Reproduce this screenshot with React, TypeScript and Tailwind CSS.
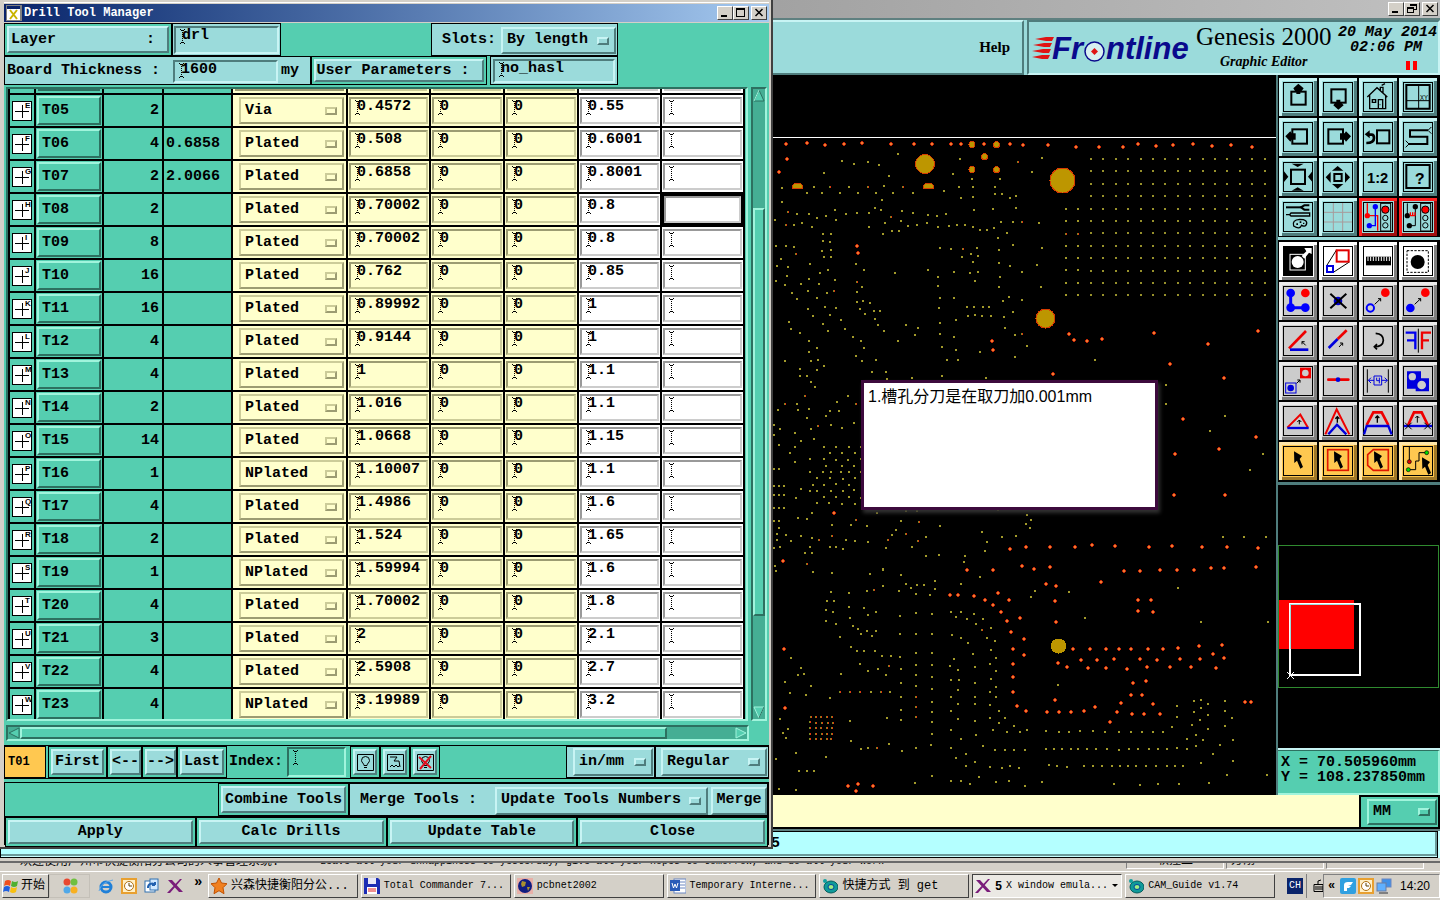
import { ReactNode } from "react";
import clsx from "clsx";

const MONO = "font-['Liberation_Mono','Noto_Sans_CJK_SC',monospace]";

const RAISED = "border-2 border-t-[#c8f4f4] border-l-[#c8f4f4] border-r-[#4f7d7d] border-b-[#4f7d7d] bg-[#9bdbdb]";
const SUNKEN = "border-2 border-t-[#4f7d7d] border-l-[#4f7d7d] border-r-[#c8f4f4] border-b-[#c8f4f4] bg-[#9bdbdb]";
const GREEN_RAISED = "border-2 border-t-[#a0f4dc] border-l-[#a0f4dc] border-r-[#2d7060] border-b-[#2d7060] bg-[#55ceb0]";
const GREEN_SUNKEN = "border-2 border-t-[#2d7060] border-l-[#2d7060] border-r-[#a0f4dc] border-b-[#a0f4dc] bg-[#55ceb0]";
const YELLOW_RAISED = "border-2 border-t-[#cccc99] border-l-[#cccc99] border-r-[#9c9c72] border-b-[#9c9c72] bg-[#ffffcc]";
const YELLOW_SUNKEN = "border-2 border-t-[#9c9c72] border-l-[#9c9c72] border-r-[#cccc99] border-b-[#cccc99] bg-[#ffffcc]";
const WHITE_SUNKEN = "border-2 border-t-[#999999] border-l-[#999999] border-r-[#cccccc] border-b-[#cccccc] bg-white";
const WIN_RAISED = "border border-t-white border-l-white border-r-[#404040] border-b-[#404040] bg-[#d4d0c8]";

interface Tool {
  id: string;
  count: number;
  slot: string;
  type: string;
  finish: string;
  drill: string;
}

const tools: Tool[] = [
  { id: "T05", count: 2, slot: "", type: "Via", finish: "0.4572", drill: "0.55" },
  { id: "T06", count: 4, slot: "0.6858", type: "Plated", finish: "0.508", drill: "0.6001" },
  { id: "T07", count: 2, slot: "2.0066", type: "Plated", finish: "0.6858", drill: "0.8001" },
  { id: "T08", count: 2, slot: "", type: "Plated", finish: "0.70002", drill: "0.8" },
  { id: "T09", count: 8, slot: "", type: "Plated", finish: "0.70002", drill: "0.8" },
  { id: "T10", count: 16, slot: "", type: "Plated", finish: "0.762", drill: "0.85" },
  { id: "T11", count: 16, slot: "", type: "Plated", finish: "0.89992", drill: "1" },
  { id: "T12", count: 4, slot: "", type: "Plated", finish: "0.9144", drill: "1" },
  { id: "T13", count: 4, slot: "", type: "Plated", finish: "1", drill: "1.1" },
  { id: "T14", count: 2, slot: "", type: "Plated", finish: "1.016", drill: "1.1" },
  { id: "T15", count: 14, slot: "", type: "Plated", finish: "1.0668", drill: "1.15" },
  { id: "T16", count: 1, slot: "", type: "NPlated", finish: "1.10007", drill: "1.1" },
  { id: "T17", count: 4, slot: "", type: "Plated", finish: "1.4986", drill: "1.6" },
  { id: "T18", count: 2, slot: "", type: "Plated", finish: "1.524", drill: "1.65" },
  { id: "T19", count: 1, slot: "", type: "NPlated", finish: "1.59994", drill: "1.6" },
  { id: "T20", count: 4, slot: "", type: "Plated", finish: "1.70002", drill: "1.8" },
  { id: "T21", count: 3, slot: "", type: "Plated", finish: "2", drill: "2.1" },
  { id: "T22", count: 4, slot: "", type: "Plated", finish: "2.5908", drill: "2.7" },
  { id: "T23", count: 4, slot: "", type: "NPlated", finish: "3.19989", drill: "3.2" },
];

// Board coordinates are in thirds of a pixel, one block per vertical section.
const vias = [
  {
    top: 0,
    points:
      "384,462 216,483 252,492 294,486 327,495 162,519 357,528 36,563 132,561 237,561 342,558 111,579 156,579 210,579 264,579 318,579 369,579 429,579 36,606 336,600 81,642 117,642 141,654 168,648 195,630 228,642 261,639 297,639 315,624 333,630 15,660 72,675 96,669 126,681 198,660 297,681 345,669 393,663 396,633 429,639 474,645 501,648 528,642 339,702 366,693 387,693 414,678 441,675 471,669 504,681 537,678 561,675 585,675 609,681 630,690 651,690 672,684 693,666 729,666 807,669 570,477 549,522 522,573 573,594 609,591 606,537 609,561 567,561 612,630 669,627 690,537 675,561 675,582 696,582 720,594 738,588 738,624 786,516 816,474 711,699 684,714 159,702 183,702 159,723 180,726 156,753 183,750 162,771 183,771 18,738 48,738 72,741 33,777 21,798 54,801 51,828 18,843 45,855 93,852 120,792 150,819 174,810 117,837 147,852 195,840 114,873 66,879 81,897 141,894 171,879 165,921 198,924 114,927 129,948 180,945 213,960 159,972 57,966 63,987 225,987 258,792 282,810 276,861 261,876 261,906 279,903 300,909 270,927 285,942 312,933 330,933 315,957 324,975 375,819 474,810 504,831 504,858 510,894 507,924 510,969 408,975 444,984 510,744 543,747 621,744 576,771 603,762 624,768 609,786 552,816 600,819 624,816 615,843 552,894 591,921 612,921 639,921 657,921 594,948 615,945 636,948 663,948 558,960 687,750 729,735 687,789 720,798 690,831 687,861 756,816 801,795 816,744 813,861 717,891 699,903 756,900 729,936 702,951 705,984 888,627 924,627 888,663 924,663 888,738 924,738 888,774 924,774 888,811 924,811 888,849 924,849 888,885 924,885",
  },
  {
    top: 990,
    points:
      "90,9 174,3 249,21 342,3 435,15 510,12 552,21 735,15 771,48 117,33 141,54 117,66 273,33 282,54 258,78 276,93 318,90 384,33 516,51 558,60 531,90 564,90 630,66 735,81 45,93 123,93 144,90 162,108 90,117 141,120 90,138 111,138 123,156 135,171 306,126 348,126 351,147 426,144 516,138 648,144 975,90 234,198 201,216 81,222 24,240 84,240 117,237 180,243 207,243 168,258 111,264 252,279 183,285 216,294 12,285 30,297 123,297 12,315 75,309 93,333 132,327 27,345 75,351 60,369 75,396 162,351 198,351 237,351 273,351 180,369 216,369 255,369 120,387 162,387 198,390 234,390 273,387 168,408 216,408 252,408 120,426 159,426 183,426 213,426 237,426 273,426 141,444 180,444 219,447 255,444 129,465 162,465 198,462 237,465 120,483 141,483 183,483 219,483 252,480 162,501 198,501 237,501 273,504 141,519 177,519 216,522 255,522 12,417 27,417 12,468 27,468 42,468 12,495 27,495 42,495 12,534 27,534 42,534 93,477 78,504 12,573 27,573 27,594 21,612 48,615 63,633 21,630 93,618 126,549 84,564 111,567 126,624 120,651 105,669 126,669 180,651 198,651 219,657 228,630 255,633 243,585 186,585 12,654 30,651 291,588 321,549 294,636 348,654 366,615 378,600 393,573 426,651 468,621 468,678 507,675 510,588 408,543 441,543 684,540 636,606 651,636 645,663 585,678 582,696 696,621 738,618 771,555 783,570 768,582 780,594 1188,165 1188,222 1365,258 1320,303 1479,372 1440,420 1359,621 1422,621 1488,621 15,708 339,718",
  },
  {
    top: 1680,
    points:
      "582,6 18,33 129,36 186,39 300,42 339,30 339,78 393,45 387,93 408,72 423,84 441,75 462,75 495,63 495,87 438,102 480,105 573,72 630,51 237,99 291,93 183,96 171,123 192,123 168,150 189,156 168,183 198,192 210,231 237,141 282,144 318,156 294,165 240,174 249,198 264,207 291,213 318,213 273,222 306,228 243,261 261,273 282,273 315,273 336,288 363,288 390,291 270,312 324,327 294,333 348,345 213,342 390,168 438,159 486,162 390,222 438,222 486,222 438,279 486,279 393,327 438,315 486,315 438,345 486,351 393,369 438,378 486,387 393,411 486,426 393,450 486,456 393,480 486,486 486,522 483,555 438,564 396,573 486,648 435,669 543,156 573,156 612,162 558,171 591,177 639,177 618,192 663,204 546,225 573,234 594,249 651,234 675,243 609,282 663,270 678,294 552,297 540,318 564,330 660,312 678,333 615,321 615,369 663,357 678,381 543,360 567,360 564,390 543,411 564,432 615,411 660,396 678,411 543,453 615,432 660,435 687,453 564,477 615,483 660,474 705,474 687,489 732,498 543,510 573,537 618,525 669,510 711,516 750,516 771,510 543,564 588,582 639,558 675,570 705,570 732,570 765,570 558,594 615,606 588,618 660,621 696,624 720,618 747,624 543,663 573,663 600,672 627,651 678,666 717,663 765,678 816,666 837,615 861,618 891,621 942,618 969,618 996,618 1026,618 1050,618 1074,618 1098,618 1128,618 1158,618 1191,618 1215,618 1239,618 828,567 852,567 876,567 903,567 924,567 951,567 978,567 1011,567 1047,570 1077,567 1104,567 1137,567 1164,567 1191,567 1221,564 1251,567 828,513 867,516 897,516 930,513 969,513 1005,516 1047,516 1083,516 1116,516 1149,516 1179,516 1206,501 1221,471 1221,438 1272,423 1293,420 1314,432 1293,444 1314,465 1272,456 1290,480 1266,495 1314,507 1278,525 1251,537 1299,540 1278,558 1365,423 1365,453 1386,474 1365,498 1389,540 1350,555 1329,582 1389,603 1371,645 1293,609 1317,669 1227,672 1164,672 1110,675 1032,672 1491,645 1494,186 1293,186 1224,84 945,174 864,375 795,93 783,111 897,96 63,294 93,324 84,345 102,342 45,366 123,378 60,399 108,405 180,414 30,477 54,507 39,519 48,534 18,597 78,579 168,591 87,633 111,633 132,633 27,687 78,690 240,483 351,474 243,543 273,567 294,564 357,552 303,396 360,396",
  },
];

const plated = [
  {
    top: 0,
    points:
      "48,432 112,429 166,435 223,432 277,429 364,432 433,432 487,432 544,432 574,432 643,432 721,432 758,434 835,435 918,440 988,441 1058,441 1105,432 1159,438 1210,435 1270,432 1325,438 1382,435 1445,441 52,478 28,517 262,738 265,758",
  },
  {
    top: 990,
    points:
      "667,33 670,60 897,12 913,29 950,32 996,28 1153,9 1315,41 1465,4 1201,102 1362,145 850,132 1240,268 1458,321 1348,357 1216,373 1212,495 1366,496 192,550 721,657 769,651 841,651 915,651 967,645 1036,648 1137,651 1207,648 1297,651 1371,651 1465,655 38,692 757,708 792,716 841,712",
  },
  {
    top: 1680,
    points:
      "592,30 670,30 1063,33 1111,33 1171,30 1222,30 1273,30 1324,24 1363,24 1458,20 993,67 828,72 859,78 541,105 565,105 613,108 646,120 685,99 718,120 670,135 692,156 712,183 751,174 724,216 763,237 730,267 761,286 730,312 729,351 730,396 742,438 769,453 855,124 859,186 1105,120 1144,120 1105,154 1150,155 908,268 961,267 1009,267 1048,267 1082,268 1135,268 1180,268 1225,264 1286,258 1357,255 1330,282 1363,294 934,300 982,300 1033,297 1110,297 1162,301 1231,297 1290,298 892,321 864,310 955,324 1009,323 1072,327 1132,321 1201,321 1264,321 1339,324 1090,369 1129,364 1082,404 1117,405 1054,430 1148,431 1042,456 1087,462 1123,463 1171,462 1021,486 855,420 832,456 868,456 904,456 943,453 976,441 1424,426 1443,426 42,267 46,444 235,678 264,673 310,678 257,694",
  },
];

// Small vias with a red edge on one side.
const mixed = [
  { top: 0, points: "181,561 293,561 398,561 54,636 362,651 48,674 77,762 260,846 192,873 744,485 756,667 580,747 888,702 924,702" },
  { top: 990, points: "105,197 45,221 257,223 145,288 258,569 147,629 187,618 354,629 408,613 447,575 444,632 112,702 755,12" },
  {
    top: 1680,
    points:
      "313,90 357,317 210,395 241,396 270,395 333,395 437,411 437,441 437,471 321,563 636,209 122,471 138,471 153,471 170,471 186,471 120,487 138,488 156,488 173,489 189,489 120,504 138,504 153,504 171,504 186,504 120,522 138,522 156,521 171,522 186,522 120,537 138,537 153,536 171,537 183,537",
  },
];

const toPixels = (blocks: { top: number; points: string }[]) =>
  blocks.flatMap(({ top, points }) =>
    points.split(" ").map((p) => {
      const [x, y] = p.split(",").map(Number);
      return [769 + Math.round(x / 3), Math.round((top + y) / 3) - 1];
    })
  );

const dots = (pts: number[][], size: number) =>
  pts.map(([x, y]) => `M${x} ${y}h${size}v${size}h${-size}z`).join("");

const bgaCols = Array.from({ length: 15 }, (_, i) => Math.round(1090 + i * 12.4));
const bgaRows = Array.from({ length: 12 }, (_, i) => Math.round(158 + i * 12.4));
const bga = bgaCols.flatMap((x) => bgaRows.map((y) => [x, y]));

function Board() {
  const red = toPixels(plated);
  const edge = toPixels(mixed);
  return (
    <svg className="block shrink-0" width="503" height="720" viewBox="773 75 503 720" shapeRendering="crispEdges">
      <rect x="773" y="137" width="503" height="1" fill="#fff" />
      <path d={dots(toPixels(vias), 2)} fill="#a39a2a" />
      <path d={dots(bga, 2)} fill="#97912c" />
      <path d={dots(edge, 2)} fill="#7d8a20" />
      <path d={edge.map(([x, y]) => `M${x + 1} ${y}h1v2h-1z`).join("")} fill="#e03a10" />
      <path d={red.map(([x, y]) => `M${x} ${y - 1}h2v1h1v2h-1v1h-2v-1h-1v-2h1z`).join("")} fill="#c42808" />
      <path d={dots(red, 2)} fill="#f07c30" />
      <g fill="#bd9600" stroke="#d63c00">
        <circle cx="925" cy="164" r="9.5" />
        <circle cx="1062.500" cy="180.500" r="12.500" />
        <circle cx="1045.500" cy="318.500" r="9.500" />
        <ellipse cx="1058.500" cy="646" rx="7.500" ry="7" stroke="#bd9600" />
        <circle cx="972" cy="144.500" r="3" />
        <circle cx="996.500" cy="144.500" r="3" />
        <circle cx="984.500" cy="156.500" r="3" />
        <circle cx="972" cy="169.500" r="3" />
        <circle cx="996.500" cy="169.500" r="3" />
        <path d="M792.500 188.500v-3l2-2h6l2 2v3z" />
        <path d="M923.500 188.500v-3l2-2h6l2 2v3z" />
      </g>
    </svg>
  );
}

function Ibeam() {
  return (
    <svg className="pointer-events-none absolute left-1 top-0 block" width="5" height="17" viewBox="0 0 5 17" shapeRendering="crispEdges">
      <path d="M0 1h1v1h-1zM4 1h1v1h-1zM1 2h1v1h-1zM3 2h1v1h-1zM1 14h1v1h-1zM3 14h1v1h-1zM0 15h1v1h-1zM4 15h1v1h-1z" />
      <path d="M2.500 2V15" stroke="#000" strokeDasharray="1 1" />
    </svg>
  );
}

function Field({ label, value = "", skin, className, caret = true }: { label: string; value?: string; skin: string; className?: string; caret?: boolean }) {
  return (
    <div className={clsx("relative", skin, className)}>
      {caret && <Ibeam />}
      <input aria-label={label} defaultValue={value} className="block h-4 w-full bg-transparent pl-[6px] text-[15px] font-bold outline-none" />
    </div>
  );
}

function OptionMenu({ label, options, value, skin, knob, className }: { label: string; options: string[]; value: string; skin: string; knob: string; className?: string }) {
  return (
    <div className={clsx("relative", skin, className)}>
      <select aria-label={label} defaultValue={value} className="block h-full w-full appearance-none bg-transparent pl-1 text-[15px] font-bold outline-none">
        {options.map((o) => (
          <option key={o}>{o}</option>
        ))}
      </select>
      <span className={clsx("pointer-events-none absolute right-[5px] top-1/2 h-2 w-3 -translate-y-1/2", knob)} />
    </div>
  );
}

const types = ["Via", "Plated", "NPlated"];

function ToolRow({ tool, letter, selected }: { tool: Tool; letter: string; selected: boolean }) {
  return (
    <tr className="h-[33px]">
      <td className="border-2 border-black p-0">
        <svg className="ml-[2px] block" width="20" height="20" viewBox="0 0 20 20" shapeRendering="crispEdges">
          <rect x=".5" y=".5" width="19" height="19" fill="#fff" stroke="#000" />
          <path d="M3 10.500H17M10.500 4V17" stroke="#000" />
          <text x="13" y="7" fontSize="8" className="font-['Liberation_Sans',sans-serif]">{letter}</text>
        </svg>
      </td>
      <td className="border-2 border-black p-0">
        <button className={clsx("mx-px block h-[29px] w-[64px] pl-[3px] text-left", GREEN_RAISED)}>{tool.id}</button>
      </td>
      <td className="border-2 border-black p-0 pr-[3px] text-right">{tool.count}</td>
      <td className="border-2 border-black p-0 pl-[2px]">{tool.slot}</td>
      <td className="border-2 border-black bg-[#ffffcc] p-0">
        <OptionMenu label={`${tool.id} type`} options={types} value={tool.type} skin={YELLOW_RAISED} knob={YELLOW_RAISED} className="ml-[6px] mr-[2px] h-[27px]" />
      </td>
      <td className="border-2 border-black bg-[#ffffcc] p-0">
        <Field label={`${tool.id} finish size`} value={tool.finish} skin={YELLOW_SUNKEN} className="mx-px h-[27px]" />
      </td>
      <td className="border-2 border-black bg-[#ffffcc] p-0">
        <Field label={`${tool.id} plus tolerance`} value="0" skin={YELLOW_SUNKEN} className="mx-px h-[27px]" />
      </td>
      <td className="border-2 border-black bg-[#ffffcc] p-0">
        <Field label={`${tool.id} minus tolerance`} value="0" skin={YELLOW_SUNKEN} className="mx-px h-[27px]" />
      </td>
      <td className="border-2 border-black bg-white p-0">
        <Field label={`${tool.id} drill size`} value={tool.drill} skin={WHITE_SUNKEN} className="mx-px h-[27px]" />
      </td>
      <td className={clsx("border-2 border-black p-0", selected ? "bg-black" : "bg-white")}>
        <Field label={`${tool.id} bit`} skin={WHITE_SUNKEN} className={clsx("h-[27px]", selected ? "mx-[2px]" : "mx-px")} caret={!selected} />
      </td>
    </tr>
  );
}

function ToolTable() {
  return (
    <table className="w-[737px] table-fixed border-collapse text-[15px] font-bold leading-[18px]">
      <colgroup>
        <col className="w-[26px]" />
        <col className="w-[68px]" />
        <col className="w-[60px]" />
        <col className="w-[69px]" />
        <col className="w-[115px]" />
        <col className="w-[83px]" />
        <col className="w-[74px]" />
        <col className="w-[74px]" />
        <col className="w-[83px]" />
        <col className="w-[83px]" />
      </colgroup>
      <tbody>
        <tr className="h-[5px]" aria-hidden="true">
          {["", "border-[#2d7060]", "", "", "border-[#9c9c72]", "border-[#cccc99]", "border-[#cccc99]", "border-[#cccc99]", "border-[#cccccc]", "border-[#cccccc]"].map((edge, i) => (
            <td key={i} className={clsx("border-x-2 border-black p-0 align-top", i > 7 ? "bg-white" : i > 3 && "bg-[#ffffcc]")}>
              {edge && <div className={clsx("mx-[2px] border-t-2", edge)} />}
            </td>
          ))}
        </tr>
        {tools.map((tool, i) => (
          <ToolRow key={tool.id} tool={tool} letter={String.fromCharCode(69 + i)} selected={tool.id === "T08"} />
        ))}
      </tbody>
    </table>
  );
}

function PushButton({ children, className, frame }: { children: ReactNode; className?: string; frame?: string }) {
  return (
    <div className={clsx("flex border border-black bg-[#55ceb0] p-[2px]", frame)}>
      <button className={clsx("flex-1 whitespace-nowrap leading-[20px]", RAISED, className)}>{children}</button>
    </div>
  );
}

function WindowButtons({ restore = false }: { restore?: boolean }) {
  return (
    <div className="flex">
      <button aria-label="Minimize" className={clsx("h-[14px] w-4", WIN_RAISED)}>
        <svg width="14" height="12" viewBox="0 0 14 12" className="block"><path d="M3 9h6" stroke="#000" strokeWidth="2" /></svg>
      </button>
      <button aria-label="Maximize" className={clsx("h-[14px] w-4", WIN_RAISED)}>
        <svg width="14" height="12" viewBox="0 0 14 12" className="block" fill="none" stroke="#000" shapeRendering="crispEdges">
          {restore ? <path d="M5.500 3V1.500h6v5H9M5.500 2.500h6M2.500 4.500h6v5h-6zM2.500 5.500h6" /> : <path d="M2.500 1.500h8v8h-8zM2 2.500h9" />}
        </svg>
      </button>
      <button aria-label="Close window" className={clsx("ml-[2px] h-[14px] w-4", WIN_RAISED)}>
        <svg width="14" height="12" viewBox="0 0 14 12" className="block"><path d="M3.500 2l7 7M10.500 2l-7 7" stroke="#000" strokeWidth="1.500" /></svg>
      </button>
    </div>
  );
}

function DrillToolManager() {
  return (
    <section className="absolute bottom-[51px] left-0 top-0 flex w-[773px] flex-col border-r-2 border-b-2 border-[#404040] bg-[#d4d0c8] pl-1 pr-[2px] pb-[2px]">
      <div className="mt-[2px] h-[2px] border-t border-white" />
      <header className="flex h-[18px] shrink-0 items-center bg-gradient-to-r from-[#0a246a] to-[#a6caf0] px-[2px]">
        <svg width="16" height="16" viewBox="0 0 16 16">
          <rect width="16" height="16" fill="#808080" />
          <rect x="1" y="4" width="13" height="11" fill="#fff" />
          <rect x="1" y="1" width="13" height="3" fill="#0a246a" />
          <path d="M4 5l7 9M11 5l-7 9" stroke="#c8b400" strokeWidth="2" />
        </svg>
        <h1 className="flex-1 pl-[2px] text-[12px] font-bold text-white">Drill Tool Manager</h1>
        <WindowButtons />
      </header>
      <div className="mt-px flex min-h-0 flex-1 flex-col bg-[#55ceb0] text-[15px] font-bold">
        <div className="flex h-[33px] shrink-0">
          <div className="flex w-[168px] border border-black p-[2px]">
            <button className={clsx("flex flex-1 items-center justify-between pl-[2px] pr-3 pt-px", RAISED)}>
              <span>Layer</span>
              <span>:</span>
            </button>
          </div>
          <div className="w-[109px] border border-black bg-[#9bdbdb] p-px pt-[2px]">
            <Field label="Layer" value="drl" skin={SUNKEN} className="h-7" />
          </div>
          <div className="ml-[150px] flex w-[187px] items-center border border-black bg-[#9bdbdb] pb-px pr-px pt-[3px]">
            <label className="w-[69px] pl-[10px]">Slots:</label>
            <OptionMenu label="Slots" options={["By length", "By count"]} value="By length" skin={RAISED} knob={RAISED} className="h-[27px] flex-1" />
          </div>
        </div>
        <div className="flex h-[29px] shrink-0">
          <div className="flex w-[307px] items-center border border-black bg-[#9bdbdb] pb-px pt-[3px]">
            <label className="w-[168px] pl-[2px]">Board Thickness :</label>
            <Field label="Board thickness" value="1600" skin={SUNKEN} className="h-[23px] w-[105px]" />
            <span className="pl-[3px]">my</span>
          </div>
          <PushButton frame="w-[176px]" className="pr-3">User Parameters :</PushButton>
          <div className="ml-[3px] w-[128px] border border-black bg-[#9bdbdb] px-[2px] pb-px pt-[2px]">
            <Field label="User parameters" value="no_hasl" skin={SUNKEN} className="h-6" />
          </div>
        </div>

        {/* tool list with its scroll bars */}
        <div className="mt-[2px] flex min-h-0 flex-1 gap-[3px] pl-[2px] pr-[2px]">
          <div className={clsx("min-w-0 flex-1 overflow-hidden", GREEN_SUNKEN)}>
            <ToolTable />
          </div>
          <div className={clsx("flex w-4 flex-col", GREEN_SUNKEN)}>
            <div className="flex flex-1 flex-col bg-[#45ae94]">
              <svg width="12" height="13" viewBox="0 0 12 13" className="block"><path d="M1 12L6 1l5 11z" fill="#55ceb0" stroke="#2d7060" /><path d="M1 12L6 1" stroke="#a0f4dc" /></svg>
              <div className="basis-[106px]" />
              <div className={clsx("grow basis-0", GREEN_RAISED)} />
              <div className="basis-[90px]" />
              <svg width="12" height="13" viewBox="0 0 12 13" className="block"><path d="M1 1h10L6 12z" fill="#55ceb0" stroke="#a0f4dc" /><path d="M11 1L6 12" stroke="#2d7060" /></svg>
            </div>
          </div>
        </div>
        <div className={clsx("ml-[2px] mr-[20px] mt-1 flex h-4 shrink-0", GREEN_SUNKEN)}>
          <div className="flex flex-1 bg-[#45ae94]">
            <svg width="12" height="12" viewBox="0 0 12 12" className="block"><path d="M11 1v10L1 6z" fill="#55ceb0" stroke="#2d7060" /></svg>
            <div className={clsx("flex-1", GREEN_RAISED)} />
            <div className="w-[68px]" />
            <svg width="12" height="12" viewBox="0 0 12 12" className="block"><path d="M1 1v10l10-5z" fill="#55ceb0" stroke="#a0f4dc" /></svg>
          </div>
        </div>

        <div className="mt-1 flex h-[34px] shrink-0 border-y border-black">
          <div className="flex w-[42px] items-center border border-black bg-[#ffc850] pl-[3px] text-[12px]">T01</div>
          <PushButton frame="ml-[2px] w-[59px]">First</PushButton>
          <PushButton frame="w-[35px]">{"<--"}</PushButton>
          <PushButton frame="w-[35px]">{"-->"}</PushButton>
          <PushButton frame="w-[50px]">Last</PushButton>
          <label className="flex w-[60px] items-center pl-[2px]">Index:</label>
          <Field label="Index" skin={GREEN_SUNKEN} className="my-px w-[59px]" />
          <div className="ml-1 flex">
            <PushButton frame="w-[30px]" className="flex items-center justify-center">
              <svg width="17" height="17" viewBox="0 0 17 17" fill="none" stroke="#000"><path d="M.5.500h16v16H.5zM7 11.500c0-2-2.500-3-2.500-5a4 4 0 018 0c0 2-2.500 3-2.500 5zM7 13.500h3" /></svg>
            </PushButton>
            <PushButton frame="w-[30px]" className="flex items-center justify-center">
              <svg width="17" height="17" viewBox="0 0 17 17" fill="none" stroke="#000"><path d="M.5.500h16v16H.5zM3 3h7l-3 4h5l1 6M3 13l2-2 2 2 2-2 2 2 2-2" /></svg>
            </PushButton>
            <PushButton frame="w-[30px]" className="flex items-center justify-center">
              <svg width="17" height="17" viewBox="0 0 17 17" fill="none" stroke="#000"><path d="M.5.500h16v16H.5zM7 11.500c0-2-2.500-3-2.500-5a4 4 0 018 0c0 2-2.500 3-2.500 5zM7 13.500h3" /><path d="M2 3l12 11M14 2L3 15" stroke="#e01020" strokeWidth="2" /></svg>
            </PushButton>
          </div>
          <div className="ml-auto flex w-[89px] border border-black bg-[#9bdbdb] py-px pl-[6px] pr-px">
            <OptionMenu label="Units" options={["in/mm", "mm/in"]} value="in/mm" skin={RAISED} knob={RAISED} className="flex-1" />
          </div>
          <div className="flex w-[114px] border border-black bg-[#9bdbdb] py-px pl-[5px] pr-px">
            <OptionMenu label="View" options={["Regular", "Full"]} value="Regular" skin={RAISED} knob={RAISED} className="flex-1" />
          </div>
        </div>

        <div className="mt-[3px] flex h-[34px] shrink-0 border border-b-0 border-black">
          <PushButton frame="ml-[213px] w-[131px]">Combine Tools</PushButton>
          <div className="flex flex-1 items-center border border-black bg-[#9bdbdb] pb-px pt-[3px]">
            <label className="flex-1 pl-[10px]">Merge Tools :</label>
            <OptionMenu label="Merge tools" options={["Update Tools Numbers", "Keep Tools Numbers"]} value="Update Tools Numbers" skin={RAISED} knob={RAISED} className="h-7 w-[213px]" />
            <button className={clsx("ml-[3px] h-7 w-[56px]", RAISED)}>Merge</button>
          </div>
        </div>
        <div className="grid h-[29px] shrink-0 grid-cols-4 border border-black">
          {["Apply", "Calc Drills", "Update Table", "Close"].map((name) => (
            <PushButton key={name}>{name}</PushButton>
          ))}
        </div>
      </div>
    </section>
  );
}

const cursor = "M45 28L69 42L62 51L72 75L64 80L54 56L46 63Z";
const thinArrow = "M47 67L65 50M57 50H65V58";

function TrafficLight() {
  return (
    <g stroke="#000" strokeWidth="3" fill="none">
      <rect x="65" y="16" width="30" height="83" fill="#9bdbdb" />
      <circle cx="79" cy="35" r="11" fill="#f00" />
      <circle cx="79" cy="60" r="8" />
      <circle cx="79" cy="82" r="8" />
    </g>
  );
}

const viewTools: { name: string; hot?: boolean; art: ReactNode }[] = [
  { name: "Pan up", art: <><rect x="37" y="41" width="43" height="39" fill="none" stroke="#000" strokeWidth="6" /><path d="M58 17L74 31L68 39H64V48H52V39H48L43 31Z" /></> },
  { name: "Pan down", art: <><rect x="37" y="34" width="43" height="40" fill="none" stroke="#000" strokeWidth="6" /><path d="M58 95L74 82L68 75H64V65H52V75H48L43 82Z" /></> },
  { name: "Home", art: <path d="M25 57L54 29L85 57M32 52V92H80V52M40 65H50V73H40ZM58 92V65H71V92M64 38V28H72V45M68 22L78 17M62 80h2" fill="none" stroke="#000" strokeWidth="4" /> },
  { name: "Zoom to point", art: <><path d="M22 21H92V92H22Z" fill="none" stroke="#000" strokeWidth="6" /><path d="M59 21V92M22 68H92" stroke="#000" strokeWidth="3" /><text x="63" y="66" fontSize="20" className="font-['Liberation_Mono',monospace]">XY</text></> },
  { name: "Pan left", art: <><rect x="40" y="34" width="44" height="43" fill="none" stroke="#000" strokeWidth="6" /><path d="M19 55L34 40L38 46H50V65H38L34 71Z" /></> },
  { name: "Pan right", art: <><rect x="28" y="34" width="44" height="43" fill="none" stroke="#000" strokeWidth="6" /><path d="M96 55L81 40L77 46H63V65H77L81 71Z" /></> },
  { name: "Previous view", art: <><rect x="54" y="37" width="37" height="39" fill="none" stroke="#000" strokeWidth="6" /><path d="M28 50H38Q45 50 45 60Q45 75 22 75" fill="none" stroke="#000" strokeWidth="8" /><path d="M17 49L32 37V61Z" /></> },
  { name: "Serpentine", art: <><path d="M87 37H33V56H85V78H30" fill="none" stroke="#000" strokeWidth="6" /><path d="M97 27L87 37L97 47M20 68L30 78L20 88" fill="none" stroke="#000" strokeWidth="3" /></> },
  { name: "Zoom out", art: <><rect x="36" y="35" width="42" height="43" fill="none" stroke="#000" strokeWidth="6" /><path d="M38 17H74L56 27ZM38 98H74L56 88ZM15 40L28 56L15 72ZM100 40L87 56L100 72Z" /></> },
  { name: "Zoom in", art: <><rect x="46" y="48" width="22" height="21" fill="none" stroke="#000" strokeWidth="6" /><path d="M39 38L56 24L73 38ZM39 78L56 92L73 78ZM35 42L20 58L35 74ZM78 42L93 58L78 74Z" /></> },
  { name: "Scale 1:2", art: <text x="24" y="75" fontSize="44" fontWeight="bold" className="font-['Liberation_Sans',sans-serif]">1:2</text> },
  { name: "Help on area", art: <><path d="M22 21H92V90H22Z" fill="none" stroke="#000" strokeWidth="6" /><text x="48" y="78" fontSize="48" fontWeight="bold" className="font-['Liberation_Mono',monospace]">?</text></> },
  { name: "Options", art: <><path d="M21 28H68" stroke="#000" strokeWidth="6" /><path d="M91 22H76L66 28L76 35H91" fill="none" stroke="#000" strokeWidth="6" /><path d="M21 50H32L36 45H92V54H36L32 50" fill="none" stroke="#000" strokeWidth="4" /><path d="M44 84Q38 66 62 64Q88 64 82 80Q78 88 68 82Q62 96 44 84Z" fill="none" stroke="#000" strokeWidth="4" /><path d="M52 76h5v5h-5zM62 70h5v5h-5zM72 74h4v4h-4z" /></> },
  { name: "Grid", art: <path d="M43 15V99M71 15V99M15 43H99M15 72H99" stroke="#a89a9a" strokeWidth="3" /> },
  { name: "Net on", hot: true, art: <><path d="M25 16V53H56V98" fill="none" stroke="#f00" strokeWidth="4" /><path d="M49 26V83H31" fill="none" stroke="#00f" strokeWidth="4" /><circle cx="25" cy="53" r="8" fill="#f00" /><circle cx="49" cy="26" r="8" fill="#00f" /><circle cx="31" cy="83" r="8" fill="#00f" /><TrafficLight /></> },
  { name: "Net off", hot: true, art: <><path d="M25 16V53M49 26V83H31" fill="none" stroke="#000" strokeWidth="3" /><circle cx="25" cy="53" r="8" /><circle cx="49" cy="26" r="8" /><circle cx="31" cy="83" r="8" /><path d="M33 53H48M34 53V43M41 53V43M48 53V43" stroke="#f00" strokeWidth="4" /><TrafficLight /></> },
];

const editTools: { name: string; tone: "white" | "gray" | "amber"; art: ReactNode }[] = [
  { name: "Select feature", tone: "white", art: <><rect x="13" y="15" width="88" height="85" /><rect x="33" y="37" width="46" height="47" fill="none" stroke="#fff" strokeWidth="3" /><circle cx="56" cy="60" r="18" fill="#fff" /><path d="M68 42L82 28L76 18H98V36L90 32L76 50Z" fill="#fff" /></> },
  { name: "Resize shape", tone: "white", art: <><path d="M23 71L53 23M43 91L91 60" stroke="#000" strokeWidth="3" /><rect x="53" y="25" width="36" height="34" fill="none" stroke="#e00000" strokeWidth="6" /><rect x="24" y="72" width="18" height="18" fill="#fff" stroke="#0000e0" strokeWidth="6" /></> },
  { name: "Measure", tone: "white", art: <><rect x="21" y="44" width="75" height="26" /><path d="M27 44V57M35 44V57M43 44V57M51 44V57M59 44V57M67 44V57M75 44V57M83 44V57M91 44V57" stroke="#fff" strokeWidth="3" /></> },
  { name: "Area select", tone: "white", art: <><rect x="24" y="26" width="64" height="65" fill="none" stroke="#000" strokeWidth="3" strokeDasharray="7 4" /><circle cx="56" cy="60" r="21" /></> },
  { name: "Chain", tone: "gray", art: <><path d="M35 33V77H79" fill="none" stroke="#00f" strokeWidth="9" /><circle cx="35" cy="33" r="13" fill="#00f" /><circle cx="35" cy="77" r="13" fill="#00f" /><circle cx="79" cy="77" r="13" fill="#00f" /><circle cx="79" cy="33" r="13" fill="#f00" /></> },
  { name: "Delete", tone: "gray", art: <><circle cx="57" cy="57" r="13" fill="#00c" /><path d="M34 35L82 79M82 35L34 79" stroke="#000" strokeWidth="6" /></> },
  { name: "Move", tone: "gray", art: <><circle cx="34" cy="78" r="11" fill="none" stroke="#00f" strokeWidth="6" /><circle cx="79" cy="32" r="13" fill="#f00" /><path d={thinArrow} fill="none" stroke="#000" strokeWidth="3" /></> },
  { name: "Copy", tone: "gray", art: <><circle cx="34" cy="78" r="13" fill="#00f" /><circle cx="79" cy="32" r="13" fill="#f00" /><path d={thinArrow} fill="none" stroke="#000" strokeWidth="3" /></> },
  { name: "Rotate line", tone: "gray", art: <><path d="M30 79L81 27" stroke="#e00" strokeWidth="8" /><path d="M33 83H88" stroke="#00d" strokeWidth="8" /><path d="M80 70L69 59M69 67V59H77" fill="none" stroke="#000" strokeWidth="3" /></> },
  { name: "Stretch line", tone: "gray", art: <><path d="M29 78L56 51" stroke="#00d" strokeWidth="8" /><path d="M56 51L83 25" stroke="#e00" strokeWidth="8" /><path d="M60 75L71 63M63 63H71V71" fill="none" stroke="#000" strokeWidth="3" /></> },
  { name: "Rotate", tone: "gray", art: <path d="M50 34Q73 36 73 55Q72 74 46 74M54 66L46 74L54 82" fill="none" stroke="#000" strokeWidth="5" /> },
  { name: "Mirror", tone: "gray", art: <><path d="M20 32H49V82M24 55H49" fill="none" stroke="#00e" strokeWidth="7" /><path d="M69 82V32H96M69 55H90" fill="none" stroke="#e00" strokeWidth="7" /><path d="M58 20V92" stroke="#000" strokeWidth="3" /></> },
  { name: "Transform", tone: "gray", art: <><rect x="63" y="17" width="33" height="32" fill="#e00" /><circle cx="79" cy="33" r="10" fill="#ccc" /><rect x="20" y="63" width="31" height="30" fill="none" stroke="#00d" strokeWidth="3" /><circle cx="35" cy="78" r="10" fill="#00d" /><path d="M53 64L63 54M55 54H63V62" fill="none" stroke="#000" strokeWidth="3" /></> },
  { name: "Break line", tone: "gray", art: <><path d="M28 53H88" stroke="#e00" strokeWidth="8" strokeLinecap="round" /><circle cx="57" cy="53" r="7" fill="#00d" /></> },
  { name: "Spacing", tone: "gray", art: <><path d="M25 22V92M88 22V92" stroke="#000" strokeWidth="3" /><path d="M28 55H45M68 55H85M36 47L28 55L36 63M77 47L85 55L77 63M45 42H68V69H45ZM53 47V56H61M61 47V64" fill="none" stroke="#00d" strokeWidth="3" /></> },
  { name: "Surface", tone: "gray", art: <><path d="M24 28H66V49H90V88H50V80H24Z" fill="#00d" /><circle cx="40" cy="44" r="11" fill="#ccc" /><circle cx="68" cy="69" r="13" fill="#ccc" /></> },
  { name: "Edge angle", tone: "gray", art: <><path d="M25 77L64 38L87 77" fill="none" stroke="#e00" strokeWidth="6" /><path d="M25 78H89" stroke="#00d" strokeWidth="7" /><path d="M61 67V54M55 60L61 54L67 60" fill="none" stroke="#000" strokeWidth="3" /></> },
  { name: "Edge peak", tone: "gray", art: <><path d="M19 97L53 22L91 97" fill="none" stroke="#e00" strokeWidth="6" /><path d="M28 97L54 68L82 97" fill="none" stroke="#00d" strokeWidth="7" /><path d="M55 62V44M49 50L55 44L61 50" fill="none" stroke="#000" strokeWidth="4" /></> },
  { name: "Edge plateau", tone: "gray", art: <><path d="M23 69L43 31H68L88 69" fill="none" stroke="#e00" strokeWidth="8" /><path d="M15 97L23 72H88L98 97" fill="none" stroke="#00d" strokeWidth="7" /><path d="M55 62V42M49 48L55 42L61 48" fill="none" stroke="#000" strokeWidth="4" /></> },
  { name: "Edge trim", tone: "gray", art: <><path d="M26 72L45 31H68L88 72" fill="none" stroke="#e00" strokeWidth="8" /><path d="M15 72H99" stroke="#00d" strokeWidth="7" /><path d="M18 62L38 82M38 62L18 82M76 62L96 82M96 62L76 82M55 62V42M49 48L55 42L61 48" fill="none" stroke="#000" strokeWidth="3" /></> },
  { name: "Pointer", tone: "amber", art: <path d={cursor} /> },
  { name: "Rectangle select", tone: "amber", art: <><rect x="26" y="23" width="62" height="62" fill="none" stroke="#e01800" strokeWidth="5" /><path d={cursor} /></> },
  { name: "Polygon select", tone: "amber", art: <><path d="M43 23H88V85H43L26 70V38Z" fill="none" stroke="#e01800" strokeWidth="5" /><path d={cursor} /></> },
  { name: "Net select", tone: "amber", art: <><path d="M31 12V59M28 83H50V57H60V32H83" fill="none" stroke="#000" strokeWidth="3" /><g stroke="#000" strokeWidth="2"><circle cx="83" cy="32" r="6" fill="#0d0" /><circle cx="28" cy="83" r="6" fill="#0d0" /><circle cx="31" cy="59" r="6" fill="#d00" /></g><path d={cursor} transform="translate(24 18)" /></> },
];

const toneClass = {
  white: "bg-white shadow-[inset_3px_3px_0_#ffffff,inset_-3px_-3px_0_#808080]",
  gray: "bg-[#cccccc] shadow-[inset_3px_3px_0_#ebebeb,inset_-3px_-3px_0_#808080]",
  amber: "bg-[#ffc850] shadow-[inset_3px_3px_0_#ffe6a8,inset_-3px_-3px_0_#a07828]",
};

function ToolIcon({ name, skin, children }: { name: string; skin: string; children: ReactNode }) {
  return (
    <button title={name} aria-label={name} className={clsx("size-[38px]", skin)}>
      <svg className="block" width="38" height="38" viewBox="0 0 114 114">
        <rect x="13.500" y="13.500" width="87" height="87" fill="none" stroke="#000" strokeWidth="3" shapeRendering="crispEdges" />
        {children}
      </svg>
    </button>
  );
}

function Sidebar() {
  return (
    <aside className="flex w-[164px] shrink-0 flex-col border-l-2 border-[#4f7d7d] bg-black">
      <div className="grid grid-cols-[repeat(4,38px)] gap-[2px] border-b-[3px] border-[#9bdbdb] pb-px pl-px pt-[3px]">
        {viewTools.map((t) => (
          <ToolIcon
            key={t.name}
            name={t.name}
            skin={t.hot ? "bg-[#9bdbdb] shadow-[inset_3px_3px_0_#ff2020,inset_-3px_-3px_0_#a01010]" : "bg-[#9bdbdb] shadow-[inset_3px_3px_0_#c8f4f4,inset_-3px_-3px_0_#4f7d7d]"}
          >
            {t.art}
          </ToolIcon>
        ))}
      </div>
      <div className="grid grid-cols-[repeat(4,38px)] gap-[2px] py-[2px] pl-px">
        {editTools.map((t) => (
          <ToolIcon key={t.name} name={t.name} skin={toneClass[t.tone]}>
            {t.art}
          </ToolIcon>
        ))}
      </div>
      {/* overview map */}
      <div className="min-h-0 flex-1 overflow-hidden border-t-[3px] border-b-2 border-t-[#4f7d7d] border-b-[#c8f4f4]">
        <svg className="block" width="162" height="262" viewBox="1278 485 162 262" shapeRendering="crispEdges">
          <path d="M1278.500 545.500H1438V687.500H1278.500Z" fill="none" stroke="#2f8a2f" />
          <rect x="1279" y="600" width="75" height="49" fill="#f00" />
          <rect x="1290" y="604" width="70" height="71" fill="none" stroke="#fff" strokeWidth="2" />
          <path d="M1290 649V604H1354" fill="none" stroke="#9bdbdb" />
          <path d="M1287 672l7 7M1294 672l-7 7" stroke="#fff" />
        </svg>
      </div>
      <div className="h-[45px] shrink-0 border-t border-r-2 border-b-2 border-t-[#2d7060] border-r-[#a0f4dc] border-b-[#a0f4dc] bg-[#55ceb0] pl-[3px] pt-1 text-[15px] font-bold leading-[15px]">
        <p>X = 70.505960mm</p>
        <p>Y = 108.237850mm</p>
      </div>
    </aside>
  );
}

function Frontline() {
  return (
    <svg width="164" height="40" viewBox="1030 26 164 40" role="img" aria-label="Frontline" className="shrink-0">
      <g fill="#e01414">
        <path d="M1036 37L1047 35H1055L1053 39H1047Z" />
        <path d="M1034 43L1045 41H1053L1051 45H1045Z" />
        <path d="M1033 49L1044 47H1052L1050 51H1044Z" />
        <path d="M1033 55L1043 53H1051L1049 57H1043Z" />
      </g>
      <g fill="#0a0a8c" fontSize="31" fontWeight="bold" fontStyle="italic" className="font-['Liberation_Sans',sans-serif]">
        <text x="1053" y="57">Fr</text>
        <text x="1107" y="57">ntline</text>
      </g>
      <circle cx="1095.500" cy="49.500" r="9.500" fill="#d8f0f0" stroke="#0a0a8c" strokeWidth="1.500" />
      <path d="M1095.500 46l3.500 3.500-3.500 3.500-3.500-3.500z" fill="#e01414" />
    </svg>
  );
}

function GenesisEditor() {
  return (
    <main className="flex min-h-0 flex-1 flex-col bg-black">
      <div className="flex h-[18px] shrink-0 items-center justify-end bg-gradient-to-r from-[#808080] to-[#c0c0c0] pr-[2px]">
        <WindowButtons restore />
      </div>
      <div className="flex h-[57px] shrink-0 border-t-2 border-[#5f8080] bg-[#9bdbdb]">
        <nav className={clsx("flex flex-1 items-center justify-end pr-3", RAISED)}>
          <button className="font-['Liberation_Serif',serif] text-[15px] font-bold">Help</button>
        </nav>
        <div className={clsx("ml-[3px] flex w-[413px] shrink-0 items-center", SUNKEN)}>
          <Frontline />
          <div className="pl-[3px] text-center font-['Liberation_Serif',serif]">
            <p className="whitespace-nowrap text-[25px] leading-[28px]">Genesis 2000</p>
            <p className="text-[14px] font-bold italic leading-[22px]">Graphic Editor</p>
          </div>
          <div className="ml-auto pr-px text-[15px] font-bold italic leading-[15px]">
            <p>20 May 2014</p>
            <p className="pl-3">02:06 PM</p>
            <div className="ml-[68px] mt-[6px] flex gap-[3px]">
              <span className="h-[9px] w-1 bg-[#ff0000]" />
              <span className="h-[9px] w-1 bg-[#ff0000]" />
            </div>
          </div>
        </div>
      </div>
      <div className="flex min-h-0 flex-1">
        <div className="relative flex min-w-0 flex-1 justify-end overflow-hidden">
          <Board />
          <div className="absolute right-[118px] top-[305px] h-[130px] w-[297px] border-[3px] border-[#3d0a3d] bg-white px-1 py-1 font-['Liberation_Sans','Noto_Sans_CJK_SC',sans-serif] text-[16px] leading-[20px] shadow-[2px_3px_4px_#333333]">
            1.槽孔分刀是在取刀加0.001mm
          </div>
        </div>
        <Sidebar />
      </div>
      <div className="flex h-[34px] shrink-0 border-b-2 border-black">
        <div className="flex-1 bg-[#ffffcc]" />
        <div className="flex w-[81px] border-2 border-b-0 border-black bg-[#55ceb0] py-[2px] pl-[6px] pr-px">
          <OptionMenu label="Display units" options={["MM", "INCH"]} value="MM" skin={GREEN_RAISED} knob={GREEN_RAISED} className="flex-1" />
        </div>
      </div>
      <div className="h-[29px] shrink-0 border-t-2 border-[#5f8080] bg-[#c8ffff] pr-[2px]">
        <div className="h-[27px] border border-black">
          <output className="block h-[24px] border-r-2 border-b-2 border-[#6a9a9a] bg-[#b4ffff] pl-[770px] text-[15px] font-bold leading-[24px]">5</output>
        </div>
      </div>
    </main>
  );
}

const taskIcons = {
  star: <path d="M8 0l2.500 5 5.500.7-4 4 1 6-5-3-5 3 1-6-4-4L5.500 5z" fill="#f08020" stroke="#c05000" />,
  disk: <><path d="M0 0h14l2 2v14H0z" fill="#1c2cb4" /><rect x="4" width="8" height="6" fill="#e8e8f8" /><rect x="3" y="9" width="10" height="7" fill="#fff" /><path d="M4 11h8M4 13h8" stroke="#e02020" /></>,
  globe: <><rect width="16" height="16" fill="#e8b0a8" /><circle cx="8" cy="8" r="7" fill="#101c80" /><path d="M5 3l4 1-1 4-3 1-1-3zM10 9l3 0-2 4z" fill="#a89030" /></>,
  word: <><rect x="4" y="1" width="12" height="14" fill="#fff" stroke="#6a86c0" /><path d="M8 4h7M8 7h7M8 10h7" stroke="#6a86c0" /><rect y="2" width="10" height="11" fill="#2b5cb8" /><path d="M2 5l1.500 5L5 6l1.500 4L8 5" fill="none" stroke="#fff" /></>,
  cam: <><ellipse cx="9" cy="9" rx="7" ry="6" fill="#109a9a" stroke="#045c5c" /><ellipse cx="9" cy="9" rx="3" ry="2.500" fill="#a0f080" stroke="#0040a0" /><circle cx="3" cy="3" r="2" fill="#10a0a0" /></>,
  x: <path d="M1 2h4l11 12h-4zM13 1h2L3 15H0z" fill="#7a1c7a" />,
};

const tasks: { title: string; icon: keyof typeof taskIcons; cjk?: boolean; count?: string }[] = [
  { title: "兴森快捷衡阳分公...", icon: "star", cjk: true },
  { title: "Total Commander 7...", icon: "disk" },
  { title: "pcbnet2002", icon: "globe" },
  { title: "Temporary Interne...", icon: "word" },
  { title: "快捷方式 到 get", icon: "cam", cjk: true },
  { title: "X window emula...", icon: "x", count: "5" },
  { title: "CAM_Guide v1.74", icon: "cam" },
];

const icon16 = (art: ReactNode) => (
  <svg width="16" height="16" viewBox="0 0 16 16" className="shrink-0">{art}</svg>
);

const clock = <><rect width="16" height="16" fill="#e8a030" /><rect x="2" y="2" width="12" height="12" fill="#fff0c8" /><circle cx="8" cy="8" r="4.500" fill="#fff" stroke="#b07010" /><path d="M8 5v3h3" fill="none" stroke="#604000" /></>;

const CELL = "flex h-[6px] w-[98px] items-end overflow-hidden border border-t-0 border-l-[#808080] border-r-white border-b-white";

function Taskbar() {
  return (
    <footer className="shrink-0 bg-[#d4d0c8] pt-[3px] text-[10px]">
      {/* lower edge of the window behind */}
      <div className="flex h-[10px] border-t-2 border-[#6a6a6a] pr-4">
        <div className="flex h-[6px] flex-1 items-end overflow-hidden whitespace-nowrap pl-5 text-[12px] leading-[14px]">
          <span className="w-[300px]">欢迎使用广州市快捷衡阳分公司的人事管理系统.</span>
          <span className="text-[10px]">Leave all your unhappiness to yesterday, give all your hopes to tomorrow, and do all your work</span>
        </div>
        <div className="flex h-[6px] items-end gap-[2px] leading-[14px]">
          <span className={clsx("justify-center text-[12px]", CELL)}>软控上</span>
          <span className={clsx("pl-1 text-[12px]", CELL)}>方刚</span>
          <span className={clsx("justify-center", CELL)}>14:20:00</span>
        </div>
      </div>
      <div className="flex h-[29px] items-center border-t border-white pb-px pl-[2px]">
        <button className={clsx("flex h-6 w-[47px] items-center text-[12px]", WIN_RAISED)}>
          <svg width="16" height="16" viewBox="0 0 16 16" className="shrink-0">
            <path d="M2 3q3-2 6 0L7 8Q4 6 1 8z" fill="#f05020" />
            <path d="M9 3q3 2 6 0l-1 5q-3 2-6 0z" fill="#50b030" />
            <path d="M1 9q3-2 6 0l-1 5q-3-2-6 0z" fill="#2060e0" />
            <path d="M8 9q3 2 6 0l-1 5q-3 2-6 0z" fill="#f8c010" />
          </svg>
          <span className="pl-[2px]">开始</span>
        </button>
        <div className="flex h-6 w-[41px] items-center justify-center border border-[#c4c0b8]">
          {icon16(<><circle cx="5" cy="4" r="3.500" fill="#e84830" /><circle cx="12" cy="4" r="3.500" fill="#70c040" /><circle cx="5" cy="12" r="3.500" fill="#50a8e8" /><circle cx="12" cy="12" r="3.500" fill="#f8b020" /></>)}
        </div>
        <div className="flex w-[116px] items-center gap-[7px] pl-2">
          {icon16(<><circle cx="8" cy="9" r="5" fill="none" stroke="#2080d8" strokeWidth="3" /><path d="M4 9h8" stroke="#2080d8" strokeWidth="2" /><path d="M1 13Q3 4 15 2" fill="none" stroke="#60a8e8" /></>)}
          {icon16(clock)}
          {icon16(<><rect x="1" y="3" width="10" height="11" fill="#fff" stroke="#3070b0" /><rect x="6" y="1" width="8" height="11" fill="#d0e8ff" stroke="#3070b0" /><path d="M4 10a4 4 0 017-3M11 7v-3M11 7H8" fill="none" stroke="#2060b0" strokeWidth="2" /></>)}
          {icon16(taskIcons.x)}
          <span className="pb-2 pl-1 text-[14px] font-bold leading-[14px]">»</span>
        </div>
        <div className="ml-[2px] flex min-w-0 flex-1 gap-[3px]">
          {tasks.map((t) => (
            <button
              key={t.title}
              className={clsx(
                "flex h-6 min-w-0 flex-1 items-center gap-1 whitespace-nowrap pl-[2px]",
                t.cjk && "text-[12px]",
                t.count ? "border border-t-[#404040] border-l-[#404040] border-r-white border-b-white bg-[#ebe9e4]" : WIN_RAISED
              )}
            >
              {icon16(taskIcons[t.icon])}
              {t.count && <b className="font-['Liberation_Sans',sans-serif] text-[12px]">{t.count}</b>}
              <span>{t.title}</span>
              {t.count && <span className="ml-auto mr-1 border-x-[3px] border-t-[3px] border-x-transparent border-t-black" />}
            </button>
          ))}
        </div>
        <div className="ml-3 mr-[3px] flex h-4 w-4 items-center justify-center bg-[#0a246a] text-white">CH</div>
        <div className="flex h-6 w-[17px] items-center border-l border-[#808080] pl-[6px]">
          <svg width="10" height="14" viewBox="0 0 10 14"><path d="M1 5.500h9v7H1zM2 8h8M2 10h8M5 5V2l3-1" fill="none" stroke="#000" /></svg>
        </div>
        <div className="flex h-6 w-[117px] items-center gap-[2px] border border-t-[#808080] border-l-[#808080] border-r-white border-b-white pl-1 text-[12px]">
          <span className="w-[10px] font-bold">«</span>
          {icon16(<><rect width="16" height="16" rx="2" fill="#30a0e0" /><path d="M4 13V7q0-3 4-3h5L11 7H8l3 1-2 2H7v3z" fill="#fff" /></>)}
          {icon16(clock)}
          {icon16(<><rect x="6" y="1" width="9" height="8" fill="#4090e8" stroke="#6a86c0" /><rect x="1" y="5" width="9" height="8" fill="#60b0ff" stroke="#6a7ca0" /><path d="M3 15h9" stroke="#808080" strokeWidth="2" /></>)}
          <time className="ml-auto mr-[9px] font-['Liberation_Sans',sans-serif]">14:20</time>
        </div>
      </div>
    </footer>
  );
}

export default function App() {
  return (
    <div className={clsx("relative flex h-screen flex-col overflow-hidden text-black", MONO)}>
      <GenesisEditor />
      <Taskbar />
      <DrillToolManager />
    </div>
  );
}
